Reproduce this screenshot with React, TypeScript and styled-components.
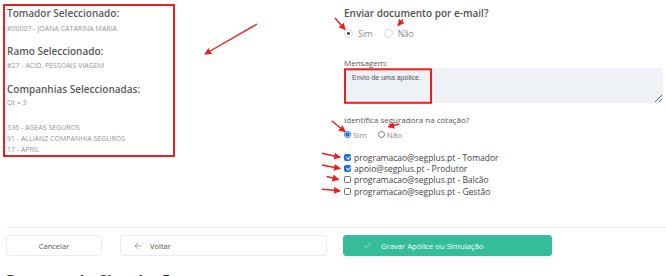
import React from "react";
import styled, { createGlobalStyle } from "styled-components";
import { ArrowLeft, Check } from "lucide-react";

const GlobalStyle = createGlobalStyle`
  html, body {
    margin: 0;
    padding: 0;
    overflow: hidden;
    background: #fff;
  }
  body {
    font-family: "Open Sans", "Liberation Sans", sans-serif;
    color: #4a4a4a;
  }
`;

const Page = styled.div`
  position: relative;
  width: 666px;
  height: 276px;
  overflow: hidden;
`;

const TopSection = styled.div`
  display: grid;
  grid-template-columns: 344px 1fr;
  height: 227px;
`;

const SummaryBox = styled.div`
  align-self: start;
  width: 166px;
  margin: 4px 0 0 3px;
  padding: 0 0 0 2px;
  border: 2px solid #e8211f;
`;

const SummaryTitle = styled.div<{ $first?: boolean }>`
  font-size: 10px;
  line-height: 14px;
  font-weight: 600;
  color: #5a5a5a;
  margin-top: ${(p) => (p.$first ? "0" : "10.4px")};
`;

const SummaryValue = styled.div<{ $gap?: number; $plain?: boolean }>`
  font-size: 7px;
  line-height: 10px;
  color: #959595;
  margin-top: ${(p) => p.$gap ?? 3.5}px;
  text-transform: ${(p) => (p.$plain ? "none" : "uppercase")};
`;

const CompanyList = styled.div`
  margin-top: 13.3px;
  font-size: 7px;
  line-height: 11px;
  color: #959595;
`;

const RightColumn = styled.div`
  padding: 5.8px 3px 0 0;
`;

const SectionTitle = styled.div`
  font-size: 10px;
  line-height: 14px;
  font-weight: 600;
  color: #525252;
`;

const RadioRow = styled.div<{ $top: number; $height: number }>`
  display: flex;
  align-items: center;
  height: ${(p) => p.$height}px;
  margin-top: ${(p) => p.$top}px;
`;

const FancyOption = styled.label`
  display: flex;
  align-items: center;
  font-size: 8.5px;
  color: #8a8a8a;
  margin-right: 11px;
`;

const FancyCircle = styled.span<{ $on?: boolean }>`
  box-sizing: border-box;
  width: 9px;
  height: 9px;
  border-radius: 50%;
  border: 1px solid #d3d7de;
  margin-right: 5px;
  display: flex;
  align-items: center;
  justify-content: center;

  &::after {
    content: "";
    width: 2.5px;
    height: 2.5px;
    border-radius: 50%;
    background: ${(p) => (p.$on ? "#4b5468" : "transparent")};
  }
`;

const FieldLabel = styled.div<{ $top: number }>`
  font-size: 8px;
  line-height: 11px;
  color: #555;
  margin-top: ${(p) => p.$top}px;
`;

const MessageArea = styled.textarea`
  display: block;
  box-sizing: border-box;
  width: 319px;
  height: 35px;
  margin: 0.2px 0 0 0;
  padding: 6px 8px;
  border: none;
  border-radius: 2px;
  background: #eef1f6;
  font-family: "Liberation Sans", Arial, sans-serif;
  font-size: 7px;
  color: #555;
  resize: vertical;
  outline: none;
`;

const PlainOption = styled.label`
  display: flex;
  align-items: center;
  font-size: 8px;
  color: #8a8a8a;
  margin-right: 11px;
`;

const SmallRadio = styled.input`
  width: 7px;
  height: 7px;
  margin: 0 2px 0 0;
  accent-color: #1b6fe0;
`;

const RecipientList = styled.div`
  margin-top: 12.4px;
`;

const RecipientRow = styled.label`
  display: flex;
  align-items: center;
  height: 11.3px;
  font-size: 8.5px;
  color: #444;
`;

const SmallCheck = styled.input`
  appearance: none;
  box-sizing: border-box;
  width: 7px;
  height: 7px;
  margin: 0 3px 0 0;
  border: 1px solid #6f6f6f;
  border-radius: 1.5px;
  background: #fff;
  position: relative;

  &:checked {
    background: #1b6fe0;
    border-color: #1b6fe0;
  }

  &:checked::after {
    content: "";
    position: absolute;
    left: 1.6px;
    top: 0.2px;
    width: 1.6px;
    height: 3.2px;
    border: solid #fff;
    border-width: 0 1px 1px 0;
    transform: rotate(45deg);
  }
`;

const Footer = styled.div`
  margin-left: 6px;
  border-top: 1px solid #ececec;
  padding-top: 7px;
  display: flex;
  align-items: center;
`;

const Button = styled.button<{ $width: number; $gap: number; $align?: string }>`
  box-sizing: border-box;
  width: ${(p) => p.$width}px;
  height: 21px;
  margin-left: ${(p) => p.$gap}px;
  display: flex;
  align-items: center;
  justify-content: ${(p) => p.$align ?? "center"};
  gap: 7px;
  padding: 0 12px;
  border: 1px solid #ececec;
  border-radius: 3px;
  background: #fff;
  color: #555;
  font-family: "Open Sans", "Liberation Sans", sans-serif;
  font-size: 7.5px;
`;

const PrimaryButton = styled(Button)`
  background: #35bd9b;
  border-color: #35bd9b;
  color: #fff;
  padding-left: 19px;
  gap: 9px;
  font-size: 7.7px;
`;

const NextHeading = styled.div`
  margin: 15px 0 0 6px;
  font-size: 16px;
  line-height: 20px;
  font-weight: 700;
  color: #2f2f2f;
`;

const Annotations = styled.svg`
  position: absolute;
  left: 0;
  top: 0;
  pointer-events: none;
`;

const arrows: [number, number, number, number][] = [
  [257, 24, 205, 54],
  [335, 18, 345, 29.5],
  [403, 19.5, 398, 25.5],
  [331.7, 120.7, 345, 131.7],
  [399.3, 124, 388.3, 126.7],
  [321.7, 153.3, 340, 157.3],
  [322, 165, 340, 168.5],
  [326.7, 176.5, 338.5, 179.5],
  [322, 189.3, 340, 190.8],
];

const recipients = [
  { email: "programacao@segplus.pt - Tomador", on: true },
  { email: "apoio@segplus.pt - Produtor", on: true },
  { email: "programacao@segplus.pt - Balcão", on: false },
  { email: "programacao@segplus.pt - Gestão", on: false },
];

export default function App() {
  return (
    <Page>
      <GlobalStyle />
      <TopSection>
        <div>
          <SummaryBox>
            <SummaryTitle $first>Tomador Seleccionado:</SummaryTitle>
            <SummaryValue>#00007 - JOANA CATARINA MARIA</SummaryValue>
            <SummaryTitle>Ramo Seleccionado:</SummaryTitle>
            <SummaryValue>#27 - ACID. PESSOAIS VIAGEM</SummaryValue>
            <SummaryTitle>Companhias Seleccionadas:</SummaryTitle>
            <SummaryValue $gap={2.6} $plain>
              Qt = 3
            </SummaryValue>
            <CompanyList>
              <div>336 - AGEAS SEGUROS</div>
              <div>91 - ALLIANZ COMPANHIA SEGUROS</div>
              <div>17 - APRIL</div>
            </CompanyList>
          </SummaryBox>
        </div>

        <RightColumn>
          <SectionTitle>Enviar documento por e-mail?</SectionTitle>
          <RadioRow $top={7.5} $height={12}>
            <FancyOption>
              <FancyCircle $on />
              Sim
            </FancyOption>
            <FancyOption>
              <FancyCircle />
              Não
            </FancyOption>
          </RadioRow>

          <FieldLabel $top={17.8}>Mensagem:</FieldLabel>
          <MessageArea defaultValue="Envio de uma apólice." />

          <FieldLabel $top={10.8}>Identifica seguradora na cotação?</FieldLabel>
          <RadioRow $top={4.2} $height={10}>
            <PlainOption>
              <SmallRadio type="radio" name="ident" defaultChecked />
              Sim
            </PlainOption>
            <PlainOption>
              <SmallRadio type="radio" name="ident" />
              Não
            </PlainOption>
          </RadioRow>

          <RecipientList>
            {recipients.map((r) => (
              <RecipientRow key={r.email}>
                <SmallCheck type="checkbox" defaultChecked={r.on} />
                {r.email}
              </RecipientRow>
            ))}
          </RecipientList>
        </RightColumn>
      </TopSection>

      <Footer>
        <Button $width={96} $gap={0}>
          Cancelar
        </Button>
        <Button $width={207} $gap={18} $align="flex-start">
          <ArrowLeft size={10} strokeWidth={1.2} />
          Voltar
        </Button>
        <PrimaryButton $width={209} $gap={16} $align="flex-start">
          <Check size={9} strokeWidth={1.4} />
          Gravar Apólice ou Simulação
        </PrimaryButton>
      </Footer>

      <NextHeading>Resumo da Simulação</NextHeading>

      <Annotations width="666" height="276" viewBox="0 0 666 276">
        <defs>
          <marker
            id="head"
            markerUnits="userSpaceOnUse"
            markerWidth="7"
            markerHeight="7"
            refX="6"
            refY="3.5"
            orient="auto"
          >
            <path d="M0,0 L7,3.5 L0,7 Z" fill="#e8211f" />
          </marker>
        </defs>
        {arrows.map(([x1, y1, x2, y2], i) => (
          <line
            key={i}
            x1={x1}
            y1={y1}
            x2={x2}
            y2={y2}
            stroke="#e8211f"
            strokeWidth="1.4"
            markerEnd="url(#head)"
          />
        ))}
        <rect
          x="345"
          y="69.3"
          width="86"
          height="33.5"
          fill="none"
          stroke="#e8211f"
          strokeWidth="2"
        />
      </Annotations>
    </Page>
  );
}
